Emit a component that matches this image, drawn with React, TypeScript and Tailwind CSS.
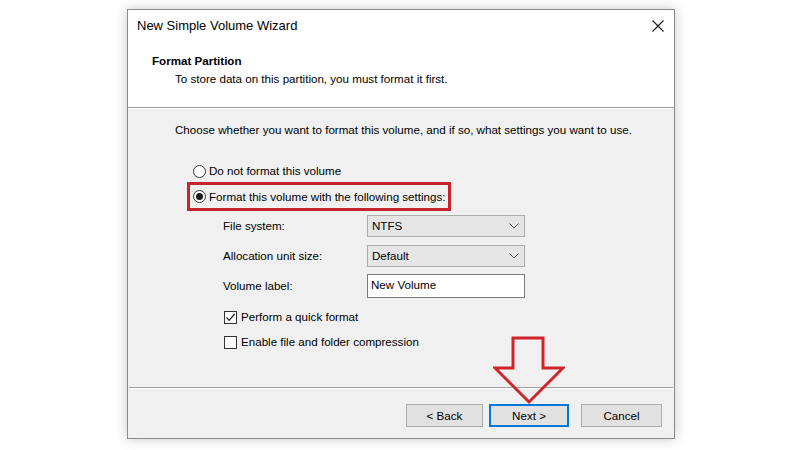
import React from "react";

const font = { fontFamily: '"Liberation Sans", Arial, sans-serif' };

function Chevron() {
  return (
    <svg width="10" height="6" viewBox="0 0 10 6" className="shrink-0">
      <path d="M0.5 0.5 L5 5 L9.5 0.5" fill="none" stroke="#555" strokeWidth="1" />
    </svg>
  );
}

function Select({ value }: { value: string }) {
  return (
    <div className="ml-auto mr-0 flex h-[22px] w-[158px] items-center justify-between border border-[#adadad] bg-[#e5e5e5] pl-[4px] pr-[5px] text-[11.6px] text-black">
      <span>{value}</span>
      <Chevron />
    </div>
  );
}

function Radio({ checked }: { checked?: boolean }) {
  return (
    <div className="flex h-[13px] w-[13px] shrink-0 items-center justify-center rounded-full border border-[#333] bg-white">
      {checked && <div className="h-[7px] w-[7px] rounded-full bg-[#1a1a1a]" />}
    </div>
  );
}

function Checkbox({ checked }: { checked?: boolean }) {
  return (
    <div className="flex h-[13px] w-[13px] shrink-0 items-center justify-center border border-[#333] bg-white">
      {checked && (
        <svg width="11" height="11" viewBox="0 0 11 11">
          <path d="M1.5 5.5 L4.2 8.3 L9.6 2" fill="none" stroke="#222" strokeWidth="1.2" />
        </svg>
      )}
    </div>
  );
}

function Button({ label, width, primary }: { label: string; width: string; primary?: boolean }) {
  return (
    <div
      className={`flex h-[23px] items-center justify-center bg-[#e1e1e1] text-[11.6px] text-black ${width} ${
        primary ? "border-2 border-[#0078d7]" : "border border-[#adadad]"
      }`}
    >
      {label}
    </div>
  );
}

export default function App() {
  return (
    <div className="h-[450px] w-[800px] overflow-hidden bg-white" style={font}>
      <div className="relative ml-[127px] mt-[9px] flex h-[430px] w-[548px] flex-col border border-[#8a8a8a] bg-[#f0f0f0] shadow-[0_0_12px_rgba(0,0,0,0.22)]">
        {/* Title bar */}
        <div className="flex h-[31px] items-center justify-between bg-white pl-[9px] pr-[10px]">
          <span className="text-[13px] text-black">New Simple Volume Wizard</span>
          <svg width="12" height="12" viewBox="0 0 12 12">
            <path d="M0.5 0.5 L11.5 11.5 M11.5 0.5 L0.5 11.5" stroke="#111" strokeWidth="1.1" />
          </svg>
        </div>
        {/* Header */}
        <div className="flex h-[66px] flex-col bg-white">
          <div className="ml-[24px] mt-[12px] text-[11.6px] font-bold leading-[16px] text-black">Format Partition</div>
          <div className="ml-[47px] mt-[2px] text-[11.6px] leading-[16px] text-black">
            To store data on this partition, you must format it first.
          </div>
        </div>
        <div className="h-px bg-[#a0a0a0]" />
        <div className="h-px bg-white" />
        {/* Body */}
        <div className="flex flex-1 flex-col">
          <div className="ml-[47px] mt-[13px] whitespace-nowrap text-[11.6px] leading-[16px] text-black">
            Choose whether you want to format this volume, and if so, what settings you want to use.
          </div>
          <div className="ml-[65px] mt-[25px] flex h-[16px] items-center gap-[3px] text-[11.6px] text-black">
            <Radio />
            <span>Do not format this volume</span>
          </div>
          <div className="ml-[59px] mt-[3px] flex h-[29px] w-[264px] items-center gap-[3px] whitespace-nowrap border-[3px] border-[#c8232c] pl-[3px] text-[11.6px] text-black">
            <Radio checked />
            <span>Format this volume with the following settings:</span>
          </div>
          <div className="ml-[95px] mt-[4px] flex h-[22px] w-[302px] items-center text-[11.6px] text-black">
            <span>File system:</span>
            <Select value="NTFS" />
          </div>
          <div className="ml-[95px] mt-[8px] flex h-[22px] w-[302px] items-center text-[11.6px] text-black">
            <span>Allocation unit size:</span>
            <Select value="Default" />
          </div>
          <div className="ml-[95px] mt-[7px] flex h-[24px] w-[302px] items-center text-[11.6px] text-black">
            <span>Volume label:</span>
            <div className="ml-auto h-[24px] w-[158px] border border-[#7a7a7a] bg-white pl-[3px] pt-[2px] text-[11.6px] leading-[16px]">
              New Volume
            </div>
          </div>
          <div className="ml-[96px] mt-[11px] flex h-[16px] items-center gap-[4px] text-[11.6px] text-black">
            <Checkbox checked />
            <span>Perform a quick format</span>
          </div>
          <div className="ml-[96px] mt-[9px] flex h-[16px] items-center gap-[4px] text-[11.6px] text-black">
            <Checkbox />
            <span>Enable file and folder compression</span>
          </div>
          <div className="mx-[1px] mt-[37px] h-px bg-[#a0a0a0]" />
          <div className="mx-[1px] h-px bg-white" />
          <div className="mr-[12px] mt-[15px] flex justify-end">
            <Button label="< Back" width="w-[77px]" />
            <div className="w-[6px]" />
            <Button label="Next >" width="w-[80px]" primary />
            <div className="w-[12px]" />
            <Button label="Cancel" width="w-[81px]" />
          </div>
        </div>
        {/* Red arrow overlay */}
        <svg className="absolute left-[365px] top-[326px]" width="72" height="70" viewBox="0 0 72 70">
          <polygon
            points="20,2 50,2 50,32 70,32 36,66 2,32 20,32"
            fill="none"
            stroke="#d1232a"
            strokeWidth="3"
            strokeLinejoin="miter"
          />
        </svg>
      </div>
    </div>
  );
}
